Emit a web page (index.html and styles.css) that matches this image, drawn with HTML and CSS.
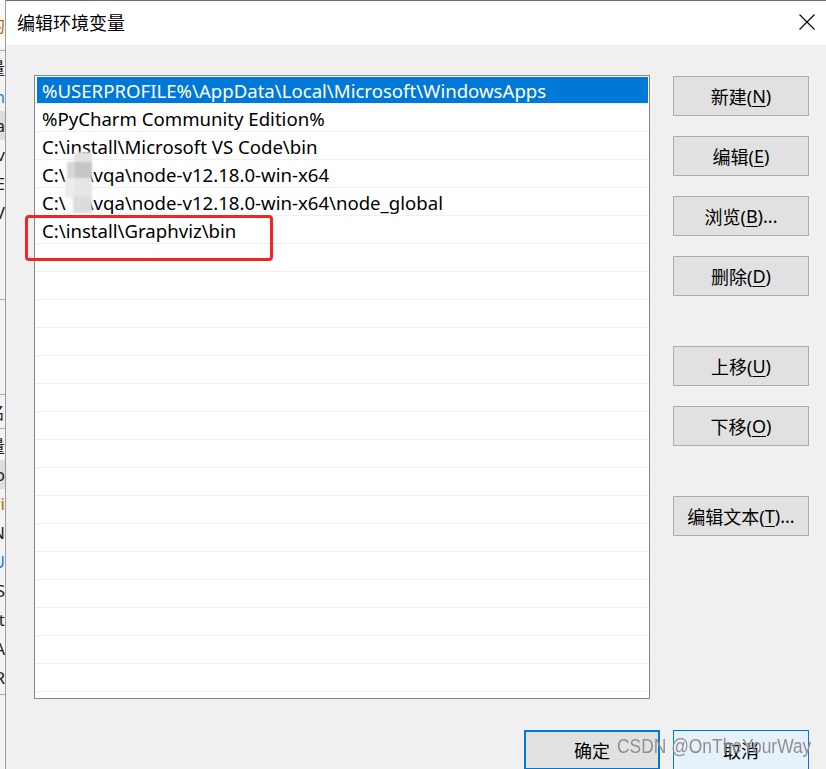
FILE: index.html
```html
<!DOCTYPE html>
<html lang="zh-CN">
<head>
<meta charset="utf-8">
<title>编辑环境变量</title>
<link rel="stylesheet" href="styles.css">
</head>
<body>
<div class="screen">
  <div class="desk">
    <div class="frag frag-top"><span class="orange">的的</span></div>
    <div class="frag-rule"></div>
    <div class="frag"><span>量量</span></div>
    <div class="frag"><span class="blue">nn</span></div>
    <div class="frag frag-hl"><span>aa</span></div>
    <div class="frag"><span>vv</span></div>
    <div class="frag"><span>EE</span></div>
    <div class="frag"><span>VV</span></div>
    <div class="frag-space"></div>
    <div class="frag-rule"></div>
    <div class="frag-space2"></div>
    <div class="frag-rule"></div>
    <div class="frag"><span>名名</span></div>
    <div class="frag-rule"></div>
    <div class="frag"><span>量量</span></div>
    <div class="frag frag-hl"><span>oo</span></div>
    <div class="frag"><span class="orange">ri</span></div>
    <div class="frag"><span>NN</span></div>
    <div class="frag"><span class="blue">UU</span></div>
    <div class="frag"><span>SS</span></div>
    <div class="frag"><span>nt</span></div>
    <div class="frag"><span>AA</span></div>
    <div class="frag"><span>RR</span></div>
    <div class="frag-rule"></div>
  </div>

  <div class="dialog">
    <div class="titlebar">
      <span class="title">编辑环境变量</span>
      <span class="close" aria-label="关闭">
        <svg width="16" height="16" viewBox="0 0 16 16"><path d="M0.5 0.5 L15.5 15.5 M15.5 0.5 L0.5 15.5" stroke="#000" stroke-width="1.1" fill="none"/></svg>
      </span>
    </div>

    <div class="content">
      <div class="main">
        <div class="list">
          <div class="row"><div class="cell selected">%USERPROFILE%\AppData\Local\Microsoft\WindowsApps</div></div>
          <div class="row"><div class="cell">%PyCharm Community Edition%</div></div>
          <div class="row"><div class="cell">C:\install\Microsoft VS Code\bin</div></div>
          <div class="row"><div class="cell">C:\<span class="hidden-user"></span>\vqa\node-v12.18.0-win-x64</div></div>
          <div class="row"><div class="cell">C:\<span class="hidden-user"></span>\vqa\node-v12.18.0-win-x64\node_global</div></div>
          <div class="row"><div class="cell">C:\install\Graphviz\bin</div></div>
          <div class="row"><div class="cell"></div></div>
          <div class="row"><div class="cell"></div></div>
          <div class="row"><div class="cell"></div></div>
          <div class="row"><div class="cell"></div></div>
          <div class="row"><div class="cell"></div></div>
          <div class="row"><div class="cell"></div></div>
          <div class="row"><div class="cell"></div></div>
          <div class="row"><div class="cell"></div></div>
          <div class="row"><div class="cell"></div></div>
          <div class="row"><div class="cell"></div></div>
          <div class="row"><div class="cell"></div></div>
          <div class="row"><div class="cell"></div></div>
          <div class="row"><div class="cell"></div></div>
          <div class="row"><div class="cell"></div></div>
          <div class="row"><div class="cell"></div></div>
          <div class="row"><div class="cell"></div></div>
          <div class="row"><div class="cell"></div></div>
        </div>

        <div class="buttons">
          <div class="btn">新建(<u>N</u>)</div>
          <div class="btn">编辑(<u>E</u>)</div>
          <div class="btn">浏览(<u>B</u>)...</div>
          <div class="btn">删除(<u>D</u>)</div>
          <div class="btn btn-far">上移(<u>U</u>)</div>
          <div class="btn">下移(<u>O</u>)</div>
          <div class="btn btn-far">编辑文本(<u>T</u>)...</div>
        </div>
      </div>

      <div class="footer">
        <div class="btn btn-ok">确定</div>
        <div class="btn btn-cancel">取消</div>
      </div>
    </div>
  </div>

  <div class="mark-box"></div>
  <svg class="blur-blob" width="28" height="62" viewBox="0 0 28 62">
    <rect x="9" y="0" width="18" height="14" fill="#e2e2e2"/>
    <rect x="2" y="10" width="9" height="16" fill="#d6d6d6"/>
    <rect x="10" y="10" width="17" height="16" fill="#c6c6c6"/>
    <rect x="0" y="26" width="10" height="20" fill="#ececec"/>
    <rect x="10" y="26" width="17" height="20" fill="#e6e6e6"/>
    <rect x="8" y="44" width="19" height="17" fill="#dcdcdc"/>
  </svg>
  <div class="watermark">CSDN @OnTheYourWay</div>
</div>
</body>
</html>
```

FILE: styles.css
```css
html, body {
  margin: 0;
  padding: 0;
}

body {
  width: 826px;
  height: 769px;
  overflow: hidden;
  font-family: "Noto Sans", "Noto Sans CJK SC", sans-serif;
  font-size: 18px;
  color: #000;
  background: #f0f0f0;
}

.screen {
  position: relative;
  display: flex;
  width: 826px;
  height: 769px;
  overflow: hidden;
}

/* background window peeking at the left edge */
.desk {
  width: 5px;
  flex: none;
  background: #f4f4f4;
  display: flex;
  flex-direction: column;
  overflow: hidden;
}

.frag {
  height: 29px;
  display: flex;
  justify-content: flex-end;
  align-items: center;
  white-space: nowrap;
  font-size: 17px;
  color: #222;
}

.frag-top {
  height: 48px;
  background: #fafafa;
}

.frag-hl {
  background: #dedede;
}

.frag-rule {
  height: 1px;
  background: #a9a9a9;
  margin: 2px 0;
}

.frag-space {
  height: 70px;
}

.frag-space2 {
  height: 90px;
}

.orange { color: #b8660a; }
.blue { color: #1a7fd8; }

/* dialog */
.dialog {
  flex: 1;
  display: flex;
  flex-direction: column;
  border-top: 1px solid #6f6f6f;
  border-left: 1px solid #9c9c9c;
  min-width: 0;
}

.titlebar {
  height: 44px;
  flex: none;
  background: #fff;
  display: flex;
  align-items: center;
  padding-left: 11px;
  padding-right: 11px;
}

.title {
  font-family: "Noto Sans CJK SC", sans-serif;
  font-size: 18px;
  position: relative;
  top: -1px;
}

.close {
  margin-left: auto;
  display: flex;
  position: relative;
  top: -1px;
}

.content {
  flex: 1;
  background: #f0f0f0;
  padding: 30px 17px 0 28px;
}

.main {
  display: flex;
  align-items: flex-start;
  gap: 23px;
}

.list {
  width: 616px;
  height: 624px;
  box-sizing: border-box;
  border: 1px solid #828790;
  background: #fff;
  overflow: hidden;
  flex: none;
}

.row {
  height: 28px;
  box-sizing: border-box;
  padding: 1px 1px 0 2px;
  border-bottom: 1px solid #efefef;
}

.cell {
  height: 26px;
  padding-left: 5px;
  line-height: 27px;
  font-size: 18.6px;
  white-space: nowrap;
  overflow: hidden;
}

.cell.selected {
  background: #0078d7;
  color: #fff;
}

.hidden-user {
  display: inline-block;
  width: 21px;
}

.buttons {
  display: flex;
  flex-direction: column;
  width: 136px;
  flex: none;
  padding-top: 1px;
}

.btn {
  height: 40px;
  box-sizing: border-box;
  border: 1px solid #adadad;
  background: #e1e1e1;
  display: flex;
  align-items: center;
  justify-content: center;
  font-size: 18px;
  white-space: nowrap;
}

.btn u {
  text-underline-offset: 3px;
  text-decoration-thickness: 1px;
}

.buttons .btn + .btn {
  margin-top: 20px;
}

.buttons .btn.btn-far {
  margin-top: 50px;
}

.footer {
  display: flex;
  justify-content: flex-end;
  gap: 13px;
  margin-top: 31px;
}

.footer .btn {
  width: 136px;
}

.btn-ok {
  border: 2px solid #0078d7;
}

.btn-cancel {
  border: 1px solid #0078d7;
  background: #e5f1fb;
}

/* annotations over the screenshot */
.mark-box {
  position: absolute;
  left: 25px;
  top: 215px;
  width: 248px;
  height: 46px;
  box-sizing: border-box;
  border: 3px solid #f22424;
  border-radius: 4px;
}

.blur-blob {
  position: absolute;
  left: 65px;
  top: 152px;
  filter: blur(0.8px);
}

.watermark {
  position: absolute;
  left: 617px;
  top: 735px;
  font-family: "Liberation Sans", Arial, sans-serif;
  font-size: 20px;
  color: rgba(105, 105, 105, 0.75);
  text-shadow: 0 0 1px rgba(255, 255, 255, 0.8);
  transform: scaleX(0.87);
  transform-origin: left center;
  white-space: nowrap;
}
```
